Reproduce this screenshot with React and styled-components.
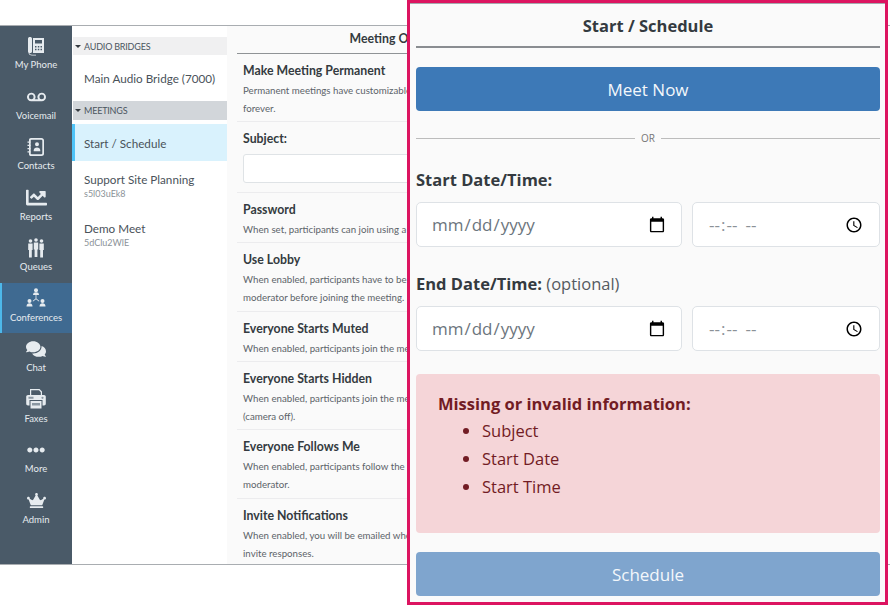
import React from 'react';
import styled, { createGlobalStyle } from 'styled-components';
import { FaVoicemail, FaChartLine, FaComments, FaEllipsisH, FaCrown } from 'react-icons/fa';

const GlobalStyle = createGlobalStyle`
  html, body { margin: 0; padding: 0; background: #fff; }
  body { font-family: "Lato", "Open Sans", sans-serif; color: #343a40; }
  * { box-sizing: border-box; }
`;

const PhoneIcon = () => (
  <svg width="18" height="20" viewBox="0 0 18 20" fill="currentColor">
    <path d="M1 2.500C1 1.500 2 1 3 1s2 .5 2 1.500v13C5 16.500 4 17 3 17s-2-.5-2-1.500z" />
    <path fillRule="evenodd" d="M6 2h11v15H6zM8 4v3.500h7V4zM8 10v1.500h1.500V10zM10.800 10v1.500h1.500V10zM13.500 10v1.500H15V10zM8 12.800v1.500h1.500v-1.500zM10.800 12.800v1.500h1.500v-1.500zM13.500 12.800v1.500H15v-1.500z" />
    <path d="M1.500 16.500c0 2 1.500 3 3.500 3h4v-.8H5c-1.500 0-2.700-.7-2.700-2.200z" />
  </svg>
);

const ContactsIcon = () => (
  <svg width="18" height="18" viewBox="0 0 18 18" fill="currentColor">
    <path fillRule="evenodd" d="M4 0h10.500C15.900 0 17 1 17 2.300v13.400c0 1.300-1.100 2.300-2.500 2.300H4c-1.200 0-2-.8-2-1.800V1.800C2 .8 2.800 0 4 0zM5 1.700c-.8 0-1.300.4-1.300 1v12.600c0 .6.500 1 1.300 1h9c.8 0 1.300-.4 1.300-1V2.700c0-.6-.5-1-1.300-1zM10 4.300a2 2 0 1 1 0 4 2 2 0 0 1 0-4zM6.700 12.500c0-2 1.400-3 3.300-3s3.300 1 3.300 3v.7H6.700z" />
    <path d="M.5 3.500h3v1.300h-3zM.5 6.700h3V8h-3zM.5 10h3v1.300h-3zM.5 13.200h3v1.300h-3z" />
  </svg>
);

const QueuesIcon = () => (
  <svg width="18" height="20" viewBox="0 0 18 20" fill="currentColor">
    <circle cx="3.500" cy="3" r="1.800" />
    <circle cx="9" cy="2" r="1.800" />
    <circle cx="14.500" cy="3" r="1.800" />
    <path d="M1.200 5.500h4.400v6.500h-.8v7.500H2v-7.500h-.8z" />
    <path d="M6.800 4.500h4.400v7h-.8V19H7.600v-7.500h-.8z" />
    <path d="M12.400 5.500h4.400v6.500H16v7.500h-2.800v-7.500h-.8z" />
  </svg>
);

const ConferenceIcon = () => (
  <svg width="20" height="20" viewBox="0 0 20 20" fill="currentColor">
    <circle cx="10" cy="2.200" r="2" />
    <path d="M7 7c0-2 1.300-2.700 3-2.700S13 5 13 7z" />
    <circle cx="3.500" cy="13" r="2" />
    <path d="M.5 18.500c0-2.500 1.300-3.300 3-3.300s3 .8 3 3.300z" />
    <circle cx="16.500" cy="13" r="2" />
    <path d="M13.500 18.500c0-2.500 1.300-3.300 3-3.300s3 .8 3 3.300z" />
    <path d="M9.600 7h.8v3.500l3 2.500-.5.600L10 11.300l-2.900 2.300-.5-.6 3-2.500z" />
  </svg>
);

const FaxIcon = () => (
  <svg width="20" height="20" viewBox="0 0 20 20" fill="currentColor">
    <path fillRule="evenodd" d="M4 0h9.500L16 2.500V6h-1.200V3.200L13 1.200H5.200V6H4z" />
    <path d="M2 6h16c1 0 1.800.8 1.800 1.800v7c0 1-.8 1.700-1.800 1.700h-1.500V11h-13v5.500H2c-1 0-1.800-.7-1.800-1.700v-7C.2 6.800 1 6 2 6z" />
    <path d="M4.500 12h11v7.500h-11z" />
    <path fill="#8a97a2" d="M6 14h8v2.500H6zM2.500 7.800h5v2h-5z" />
    <circle cx="16.500" cy="8.800" r="1.100" fill="#8a97a2" />
  </svg>
);

const Page = styled.div`
  position: relative;
  width: 890px;
  height: 605px;
  padding-top: 25px;
  overflow: hidden;
`;

const Frame = styled.div`
  display: flex;
  height: 540px;
  border-top: 1px solid #a9adb1;
  border-bottom: 1px solid #a9adb1;
`;

const Sidebar = styled.nav`
  width: 72px;
  flex: none;
  padding-top: 4px;
  background: #4a5a68;
`;

const NavItem = styled.div`
  height: 50.55px;
  display: flex;
  flex-direction: column;
  align-items: center;
  padding-top: 5px;
  color: #e6ebef;
  font-size: 9.500px;
  background: ${p => (p.$active ? '#3f6a91' : 'transparent')};
  border-left: ${p => (p.$active ? '2px solid #4db8ea' : 'none')};
  padding-right: ${p => (p.$active ? '2px' : '0')};
`;

const NavIcon = styled.div`
  height: 21px;
  display: flex;
  align-items: center;
  justify-content: center;
  font-size: ${p => p.$size || 18}px;
`;

const NavLabel = styled.span`
  margin-top: 1px;
  line-height: 16px;
`;

const ListPane = styled.div`
  width: 155px;
  flex: none;
  padding-top: 11px;
  background: #fff;
`;

const ListHeader = styled.div`
  height: ${p => p.$h}px;
  margin-left: 1px;
  margin-bottom: ${p => p.$gap || 0}px;
  display: flex;
  align-items: center;
  gap: 3px;
  padding-left: 2px;
  background: ${p => p.$bg};
  color: #4b5560;
  font-size: 9px;
  letter-spacing: -0.2px;
`;

const Caret = styled.span`
  width: 0;
  height: 0;
  border-left: 3px solid transparent;
  border-right: 3px solid transparent;
  border-top: 3px solid #343a40;
`;

const ListItem = styled.div`
  height: ${p => p.$h}px;
  padding-left: ${p => (p.$active ? '9px' : '12px')};
  padding-top: ${p => p.$top}px;
  background: ${p => (p.$active ? '#d9f2fd' : 'transparent')};
  border-left: ${p => (p.$active ? '3px solid #4fc3f7' : 'none')};
  color: #4a525a;
  font-size: 11.700px;
  line-height: 16px;
`;

const ItemCode = styled.div`
  margin-top: 1px;
  font-size: 9px;
  line-height: 12px;
  color: #8b9298;
`;

const Options = styled.div`
  flex: 0 0 180px;
  padding-left: 10px;
  background: #fafafa;
  overflow: hidden;
`;

const OptionsTitle = styled.div`
  width: 318px;
  height: 28px;
  line-height: 26px;
  text-align: center;
  font-size: 12.300px;
  font-weight: 700;
  border-bottom: 1px solid #8f9396;
`;

const OptionRow = styled.div`
  width: 318px;
  padding: 7px 6px 4.400px;
  border-bottom: 1px solid #ececee;
`;

const OptionName = styled.div`
  font-size: 12.300px;
  font-weight: 700;
  line-height: 20px;
`;

const OptionText = styled.div`
  font-size: 9.700px;
  line-height: 18px;
  color: #5c6369;
  white-space: pre;
`;

const SubjectField = styled.input`
  display: block;
  width: 100%;
  height: 29px;
  margin: 4.500px 0;
  background: #fff;
  border: 1px solid #dfe3e6;
  border-radius: 3px;
`;

const Overlay = styled.section`
  position: absolute;
  top: 0;
  left: 407px;
  width: 481px;
  height: 605px;
  padding: 0 5px 0 6px;
  background: #fafafa;
  border: 3px solid #dc1460;
  box-shadow: inset 0 1px 0 #a4a9ad;
  display: flex;
  flex-direction: column;
  font-family: "Open Sans", sans-serif;
`;

const OverlayTitle = styled.h2`
  margin: 0;
  height: 45px;
  flex: none;
  line-height: 45px;
  text-align: center;
  font-size: 16.500px;
  font-weight: 700;
  border-bottom: 2px solid #8a8d91;
`;

const BlueButton = styled.button`
  display: block;
  width: 100%;
  height: 44px;
  flex: none;
  margin-top: 19px;
  border: none;
  border-radius: 4px;
  color: #f3f7fb;
  font: 400 17px "Open Sans", sans-serif;
  background: ${p => (p.$muted ? '#7fa5ce' : '#3d79b7')};
`;

const OrLine = styled.div`
  display: flex;
  align-items: center;
  gap: 6px;
  height: 14px;
  margin-top: 20px;
  color: #777;
  font-size: 10px;
  &::before, &::after {
    content: "";
    flex: 1;
    height: 1px;
    background: #bcbcbc;
  }
`;

const FieldLabel = styled.div`
  margin-top: ${p => p.$top}px;
  height: 26px;
  line-height: 26px;
  font-size: 16.500px;
  font-weight: 700;
`;

const Optional = styled.span`
  font-weight: 400;
  color: #555b61;
`;

const FieldRow = styled.div`
  display: grid;
  grid-template-columns: 266px 188px;
  gap: 10px;
  margin-top: 9px;
`;

const DateInput = styled.input`
  height: 45px;
  width: 100%;
  padding: 0 15px 0 14px;
  background: #fff;
  border: 1px solid #dee2e6;
  border-radius: 5px;
  color: #6c757d;
  font: 400 17px "Open Sans", sans-serif;
  &::-webkit-calendar-picker-indicator {
    width: 18px;
    height: 18px;
    margin: 0;
    padding: 0;
    opacity: 1;
  }
`;

const TimeInput = styled(DateInput)`
  padding: 0 16px 0 15px;
  letter-spacing: 1px;
  color: #8b9197;
  &::-webkit-datetime-edit-ampm-field {
    margin-left: 4px;
  }
`;

const Alert = styled.div`
  height: 159px;
  flex: none;
  margin-top: 23px;
  padding: 16px 22px;
  background: #f5d5d8;
  border-radius: 4px;
  color: #721c24;
`;

const AlertTitle = styled.div`
  line-height: 27px;
  font-size: 16.500px;
  font-weight: 700;
`;

const AlertList = styled.ul`
  margin: 0;
  padding-left: 44px;
  font-size: 16.500px;
`;

const AlertItem = styled.li`
  height: 28px;
  line-height: 28px;
`;

const navItems = [
  { label: 'My Phone', icon: <PhoneIcon /> },
  { label: 'Voicemail', icon: <FaVoicemail />, size: 19 },
  { label: 'Contacts', icon: <ContactsIcon /> },
  { label: 'Reports', icon: <FaChartLine />, size: 21 },
  { label: 'Queues', icon: <QueuesIcon /> },
  { label: 'Conferences', icon: <ConferenceIcon />, active: true },
  { label: 'Chat', icon: <FaComments />, size: 20 },
  { label: 'Faxes', icon: <FaxIcon /> },
  { label: 'More', icon: <FaEllipsisH />, size: 18 },
  { label: 'Admin', icon: <FaCrown />, size: 19 },
];

const options = [
  { name: 'Make Meeting Permanent', text: 'Permanent meetings have customizable settings that last\nforever.' },
  { name: 'Subject:', field: true },
  { name: 'Password', text: 'When set, participants can join using a password.' },
  { name: 'Use Lobby', text: 'When enabled, participants have to be admitted by a\nmoderator before joining the meeting.' },
  { name: 'Everyone Starts Muted', text: 'When enabled, participants join the meeting muted.' },
  { name: 'Everyone Starts Hidden', text: 'When enabled, participants join the meeting hidden\n(camera off).' },
  { name: 'Everyone Follows Me', text: 'When enabled, participants follow the focus of the\nmoderator.' },
  { name: 'Invite Notifications', text: 'When enabled, you will be emailed when there are\ninvite responses.' },
];

export default function App() {
  return (
    <Page>
      <GlobalStyle />
      <Frame>
        <Sidebar>
          {navItems.map(item => (
            <NavItem key={item.label} $active={item.active}>
              <NavIcon $size={item.size}>{item.icon}</NavIcon>
              <NavLabel>{item.label}</NavLabel>
            </NavItem>
          ))}
        </Sidebar>

        <ListPane>
          <ListHeader $h={18} $bg="#f0f0f1"><Caret />AUDIO BRIDGES</ListHeader>
          <ListItem $h={46} $top={15}>Main Audio Bridge (7000)</ListItem>
          <ListHeader $h={19} $gap={4} $bg="#d2d6da"><Caret />MEETINGS</ListHeader>
          <ListItem $h={37} $top={11} $active>Start / Schedule</ListItem>
          <ListItem $h={49} $top={10}>
            Support Site Planning
            <ItemCode>s5l03uEk8</ItemCode>
          </ListItem>
          <ListItem $h={49} $top={10}>
            Demo Meet
            <ItemCode>5dClu2WlE</ItemCode>
          </ListItem>
        </ListPane>

        <Options>
          <OptionsTitle>Meeting Options</OptionsTitle>
          {options.map(opt => (
            <OptionRow key={opt.name}>
              <OptionName>{opt.name}</OptionName>
              {opt.field ? <SubjectField type="text" /> : <OptionText>{opt.text}</OptionText>}
            </OptionRow>
          ))}
        </Options>
      </Frame>

      <Overlay>
        <OverlayTitle>Start / Schedule</OverlayTitle>
        <BlueButton>Meet Now</BlueButton>
        <OrLine>OR</OrLine>
        <FieldLabel $top={22}>Start Date/Time:</FieldLabel>
        <FieldRow>
          <DateInput type="date" />
          <TimeInput type="time" />
        </FieldRow>
        <FieldLabel $top={24}>End Date/Time: <Optional>(optional)</Optional></FieldLabel>
        <FieldRow>
          <DateInput type="date" />
          <TimeInput type="time" />
        </FieldRow>
        <Alert>
          <AlertTitle>Missing or invalid information:</AlertTitle>
          <AlertList>
            <AlertItem>Subject</AlertItem>
            <AlertItem>Start Date</AlertItem>
            <AlertItem>Start Time</AlertItem>
          </AlertList>
        </Alert>
        <BlueButton $muted>Schedule</BlueButton>
      </Overlay>
    </Page>
  );
}
